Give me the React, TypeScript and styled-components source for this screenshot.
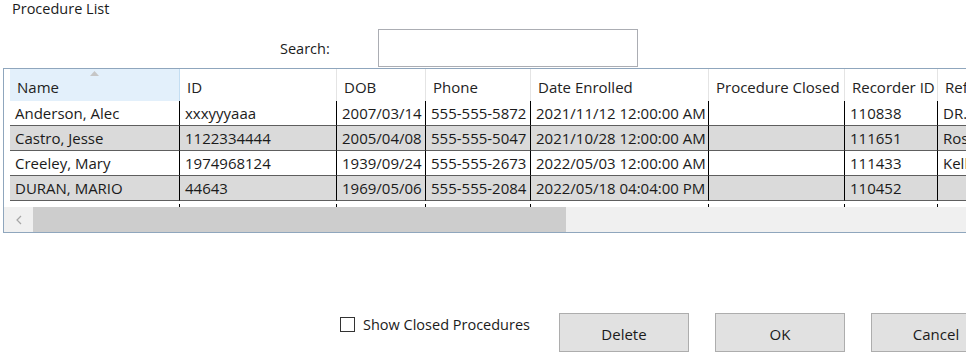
import React from "react";
import styled, { createGlobalStyle } from "styled-components";

const GlobalStyle = createGlobalStyle`
  html, body {
    margin: 0;
    padding: 0;
    background: #ffffff;
  }
  body {
    font-family: "Open Sans", "Noto Sans", sans-serif;
    font-size: 15px;
    color: #1b1b1b;
  }
`;

const COLS = "6px 170px 157px 89px 105px 178px 136px 93px 120px";

const Window = styled.div`
  width: 966px;
  height: 357px;
  overflow: hidden;
  display: flex;
  flex-direction: column;
`;

const Title = styled.div`
  padding-left: 12px;
  line-height: 18px;
  height: 18px;
  font-size: 14.5px;
`;

const SearchRow = styled.div`
  display: flex;
  align-items: center;
  margin-top: 11px;
  padding-left: 280px;
`;

const SearchLabel = styled.label`
  width: 98px;
  font-size: 14.5px;
`;

const SearchInput = styled.input`
  box-sizing: border-box;
  width: 260px;
  height: 38px;
  border: 1px solid #abadb3;
  background: #fff;
  outline: none;
`;

const Grid = styled.div`
  box-sizing: border-box;
  margin: 1px 0 0 3px;
  width: 1060px;
  border: 1px solid #8fa6bd;
  border-right: none;
  display: flex;
  flex-direction: column;
`;

const Row = styled.div<{ $shade?: boolean }>`
  display: grid;
  grid-template-columns: ${COLS};
  height: 25px;
  background: ${(p) => (p.$shade ? "#dadada" : "#ffffff")};
`;

const HeaderRow = styled.div`
  display: grid;
  grid-template-columns: ${COLS};
  height: 32px;
`;

const HeaderCell = styled.div<{ $active?: boolean }>`
  box-sizing: border-box;
  display: flex;
  flex-direction: column;
  justify-content: flex-end;
  padding: 0 0 4px 7px;
  color: #222;
  border-right: 1px solid ${(p) => (p.$active ? "#c4def2" : "#e4e4e4")};
  background: ${(p) => (p.$active ? "#e3f0fb" : "#ffffff")};
  white-space: nowrap;
  overflow: hidden;
`;

const SortArrow = styled.svg`
  align-self: center;
  margin: 0 7px auto 0;
  padding-top: 2px;
`;

const Cell = styled.div`
  box-sizing: border-box;
  display: flex;
  align-items: center;
  padding-left: 5px;
  border-right: 1px solid #000;
  border-bottom: 1px solid #5e5e5e;
  white-space: nowrap;
  overflow: hidden;
`;

const RowHeader = styled.div`
  background: #ffffff;
`;

const TickRow = styled.div`
  display: grid;
  grid-template-columns: ${COLS};
  height: 6px;
`;

const Tick = styled.div`
  background: linear-gradient(#000, #000) right 3px / 1px 3px no-repeat;
`;

const ScrollBar = styled.div`
  display: flex;
  height: 25px;
  background: #f0f0f0;
`;

const ScrollButton = styled.div`
  width: 29px;
  display: flex;
  align-items: center;
  justify-content: center;
`;

const ScrollThumb = styled.div`
  width: 533px;
  background: #cdcdcd;
`;

const Footer = styled.div`
  display: flex;
  align-items: flex-start;
  margin-top: 80px;
  padding-left: 340px;
`;

const CheckGroup = styled.label`
  flex: none;
  width: 219px;
  display: flex;
  align-items: center;
  gap: 8px;
  margin-top: 4px;
  line-height: 15px;
  font-size: 14.5px;
  white-space: nowrap;
`;

const CheckBox = styled.span`
  flex: none;
  box-sizing: border-box;
  width: 15px;
  height: 15px;
  border: 1px solid #333;
  background: #fff;
`;

const ButtonBar = styled.div`
  flex: none;
  display: flex;
  gap: 26px;
`;

const DialogButton = styled.button`
  box-sizing: border-box;
  flex: none;
  width: 130px;
  height: 39px;
  background: #e1e1e1;
  border: 1px solid #adadad;
  font: inherit;
  color: #1b1b1b;
  padding: 3px 0 0;
`;

const headers = [
  "Name",
  "ID",
  "DOB",
  "Phone",
  "Date Enrolled",
  "Procedure Closed",
  "Recorder ID",
  "Ref",
];

const rows = [
  ["Anderson, Alec", "xxxyyyaaa", "2007/03/14", "555-555-5872", "2021/11/12 12:00:00 AM", "", "110838", "DR."],
  ["Castro, Jesse", "1122334444", "2005/04/08", "555-555-5047", "2021/10/28 12:00:00 AM", "", "111651", "Ros"],
  ["Creeley, Mary", "1974968124", "1939/09/24", "555-555-2673", "2022/05/03 12:00:00 AM", "", "111433", "Kell"],
  ["DURAN, MARIO", "44643", "1969/05/06", "555-555-2084", "2022/05/18 04:04:00 PM", "", "110452", ""],
];

export default function App() {
  return (
    <>
      <GlobalStyle />
      <Window>
        <Title>Procedure List</Title>
        <SearchRow>
          <SearchLabel>Search:</SearchLabel>
          <SearchInput type="text" />
        </SearchRow>
        <Grid>
          <HeaderRow>
            <RowHeader />
            {headers.map((h, i) => (
              <HeaderCell key={h} $active={i === 0}>
                {i === 0 && (
                  <SortArrow width="9" height="5" viewBox="0 0 9 5">
                    <path d="M0 5 L4.5 0 L9 5 Z" fill="#c6c6c6" />
                  </SortArrow>
                )}
                {h}
              </HeaderCell>
            ))}
          </HeaderRow>
          {rows.map((r, ri) => (
            <Row key={ri} $shade={ri % 2 === 1}>
              <RowHeader />
              {r.map((c, ci) => (
                <Cell key={ci}>{c}</Cell>
              ))}
            </Row>
          ))}
          <TickRow>
            <RowHeader />
            {headers.map((h) => (
              <Tick key={h} />
            ))}
          </TickRow>
          <ScrollBar>
            <ScrollButton>
              <svg width="6" height="10" viewBox="0 0 6 10">
                <path d="M5 1 L1 5 L5 9" fill="none" stroke="#a6a6a6" strokeWidth="1.2" />
              </svg>
            </ScrollButton>
            <ScrollThumb />
          </ScrollBar>
        </Grid>
        <Footer>
          <CheckGroup>
            <CheckBox />
            Show Closed Procedures
          </CheckGroup>
          <ButtonBar>
            <DialogButton>Delete</DialogButton>
            <DialogButton>OK</DialogButton>
            <DialogButton>Cancel</DialogButton>
          </ButtonBar>
        </Footer>
      </Window>
    </>
  );
}
